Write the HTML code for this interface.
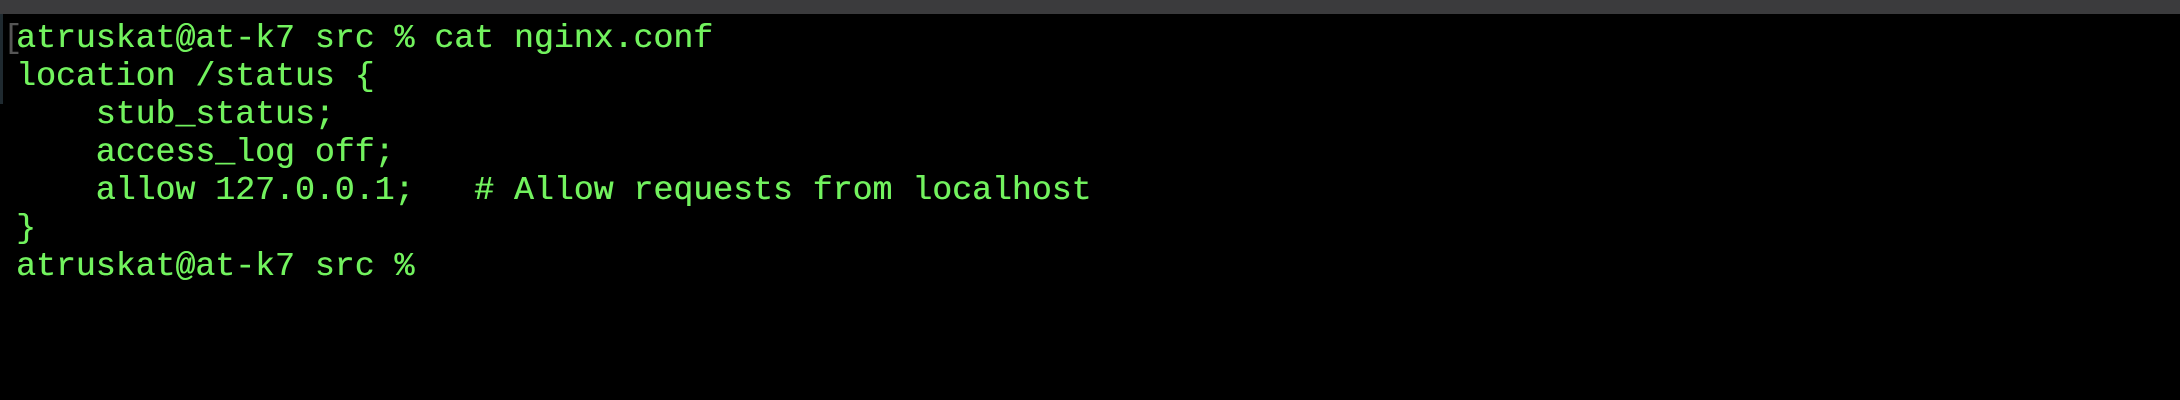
<!DOCTYPE html>
<html><head><style>
html,body{margin:0;padding:0;width:2180px;height:400px;background:#000;overflow:hidden}
.top{position:absolute;left:0;top:0;width:2180px;height:14px;background:#3b3b3d}
.side{position:absolute;left:0;top:14px;width:3px;height:90px;background:#1f2a30}
pre{position:absolute;left:16px;top:19px;margin:0;font-family:"Liberation Mono",monospace;font-size:33.2px;line-height:38px;color:#72f25e;letter-spacing:0;text-shadow:0.4px 0 0 #72f25e}
.br{position:absolute;left:3px;top:20px;color:#555;font-family:"Liberation Mono",monospace;font-size:33px;line-height:38px}
</style></head><body>
<div class="top"></div>
<div class="side"></div>
<div class="br">[</div>
<pre>atruskat@at-k7 src % cat nginx.conf
location /status {
    stub_status;
    access_log off;
    allow 127.0.0.1;   # Allow requests from localhost
}
atruskat@at-k7 src %</pre>
</body></html>
